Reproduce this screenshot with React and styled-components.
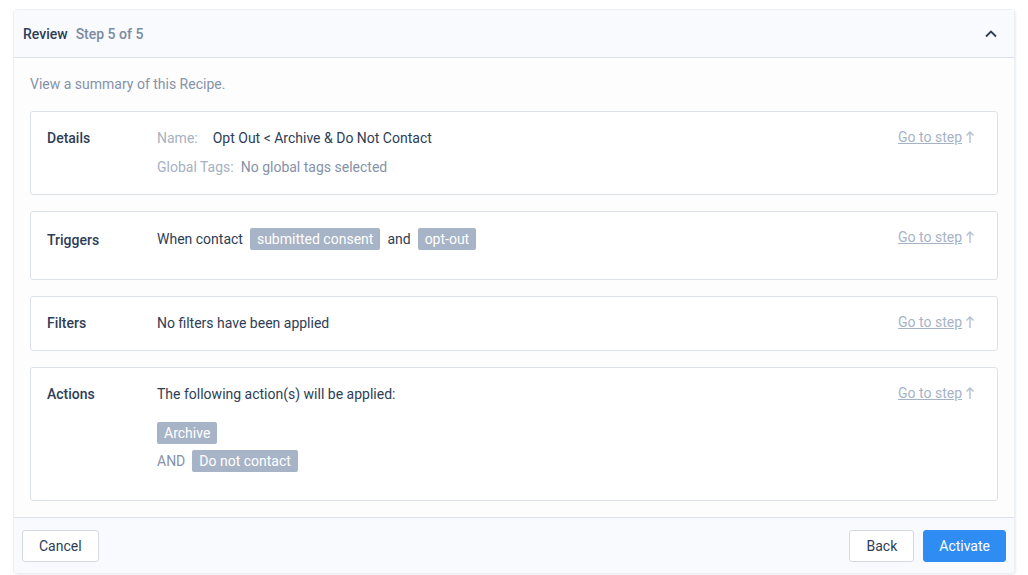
import React from 'react'
import styled, { createGlobalStyle } from 'styled-components'

const GlobalStyle = createGlobalStyle`
  body {
    margin: 0;
    background: #ffffff;
    font-family: Roboto, "Liberation Sans", sans-serif;
    font-size: 14px;
    color: #2e3d56;
  }
`

const Page = styled.div`
  padding: 10px 14px 2px 14px;
`

const Card = styled.div`
  background: #fdfdfe;
  border-radius: 3px;
  box-shadow: 0 0 0 1px #eceff4, 1px 1px 3px rgba(40, 55, 80, 0.18);
`

const Header = styled.div`
  display: flex;
  align-items: center;
  height: 47px;
  padding: 0 16px 0 9px;
  background: #f9fafd;
  border-bottom: 1px solid #dde2ea;
`

const Title = styled.span`
  font-weight: 500;
  color: #2e3d56;
  margin-right: 8px;
`

const Step = styled.span`
  color: #7b8aa3;
  font-weight: 500;
  flex: 1;
`

const Body = styled.div`
  padding: 16px 16px 16px 16px;
`

const Intro = styled.p`
  margin: 0 0 17px 0;
  color: #8592a8;
  line-height: 20px;
`

const Sections = styled.div`
  display: flex;
  flex-direction: column;
  gap: 16px;
`

const Section = styled.div`
  display: flex;
  border: 1px solid #dde2ea;
  border-radius: 3px;
  padding: 16px 22px 17px 16px;
  background: #ffffff;
`

const Label = styled.div`
  width: 110px;
  font-weight: 500;
  line-height: 20px;
  padding-top: ${p => p.$pt || 0}px;
  color: #2e3d56;
`

const Content = styled.div`
  flex: 1;
`

const Row = styled.div`
  display: flex;
  align-items: center;
  gap: 7px;
  line-height: 20px;
  min-height: ${p => p.$h || 20}px;
  margin-bottom: ${p => p.$mb || 0}px;
`

const Muted = styled.span`
  color: #a6b1c2;
  margin-right: ${p => p.$mr || 0}px;
`

const Gray = styled.span`
  color: #8592a8;
`

const Tag = styled.span`
  background: #a7b3c6;
  color: #ffffff;
  border-radius: 2px;
  padding: 0 7px;
  line-height: 22px;
  height: 22px;
  display: inline-block;
`

const GoLink = styled.a`
  color: #a6b3c7;
  text-decoration: underline;
  line-height: 20px;
  align-self: flex-start;
  display: flex;
  align-items: center;
  gap: 3px;
  margin-top: -1px;
  cursor: pointer;
`

const Footer = styled.div`
  display: flex;
  align-items: center;
  padding: 12px 8px 11px 8px;
  background: #f9fafd;
  border-top: 1px solid #dde2ea;
  gap: 9px;
`

const Spacer = styled.div`
  flex: 1;
`

const Button = styled.button`
  font-family: inherit;
  font-size: 14px;
  height: 32px;
  padding: 0 ${p => p.$px || 16}px;
  border-radius: 3px;
  border: 1px solid ${p => (p.$primary ? '#2e8cf3' : '#d3d9e3')};
  background: ${p => (p.$primary ? '#2e8cf3' : '#ffffff')};
  color: ${p => (p.$primary ? '#ffffff' : '#2e3d56')};
  cursor: pointer;
`

const ArrowUp = () => (
  <svg width="10" height="14" viewBox="0 0 10 14" fill="none" stroke="#b4bfcf" strokeWidth="1.4">
    <path d="M5 13V2M1.5 5.5L5 2l3.5 3.5" />
  </svg>
)

const Chevron = () => (
  <svg width="14" height="10" viewBox="0 0 14 10" fill="none" stroke="#2e3d56" strokeWidth="1.8">
    <path d="M2 7.5L7 2.5l5 5" />
  </svg>
)

const GoToStep = () => (
  <GoLink>
    Go to step <ArrowUp />
  </GoLink>
)

export default function App() {
  return (
    <Page>
      <GlobalStyle />
      <Card>
        <Header>
          <Title>Review</Title>
          <Step>Step 5 of 5</Step>
          <Chevron />
        </Header>
        <Body>
          <Intro>View a summary of this Recipe.</Intro>
          <Sections>
            <Section>
              <Label>Details</Label>
              <Content>
                <Row $mb={9}>
                  <Muted $mr={8}>Name:</Muted>
                  <span>Opt Out &lt; Archive &amp; Do Not Contact</span>
                </Row>
                <Row>
                  <Muted>Global Tags:</Muted>
                  <Gray>No global tags selected</Gray>
                </Row>
              </Content>
              <GoToStep />
            </Section>
            <Section>
              <Label $pt={2}>Triggers</Label>
              <Content>
                <Row $h={22} $mb={12}>
                  <span>When contact</span>
                  <Tag>submitted consent</Tag>
                  <span>and</span>
                  <Tag>opt-out</Tag>
                </Row>
              </Content>
              <GoToStep />
            </Section>
            <Section>
              <Label>Filters</Label>
              <Content>
                <Row>No filters have been applied</Row>
              </Content>
              <GoToStep />
            </Section>
            <Section>
              <Label>Actions</Label>
              <Content>
                <Row $mb={18}>The following action(s) will be applied:</Row>
                <Row $mb={6}>
                  <Tag>Archive</Tag>
                </Row>
                <Row $mb={11}>
                  <Gray>AND</Gray>
                  <Tag>Do not contact</Tag>
                </Row>
              </Content>
              <GoToStep />
            </Section>
          </Sections>
        </Body>
        <Footer>
          <Button>Cancel</Button>
          <Spacer />
          <Button>Back</Button>
          <Button $primary $px={15}>Activate</Button>
        </Footer>
      </Card>
    </Page>
  )
}
